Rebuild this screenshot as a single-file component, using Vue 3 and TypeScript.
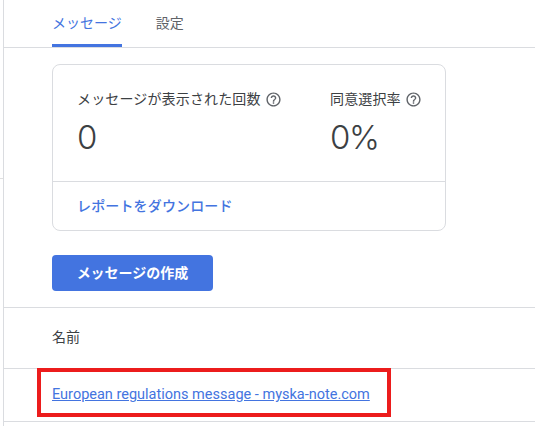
<script setup lang="ts">
const stats = [
  { label: 'メッセージが表示された回数', value: '0' },
  { label: '同意選択率', value: '0%' },
]
</script>

<template>
  <div class="page">
    <aside class="rail"><div class="rail-line"></div></aside>
    <main class="main">
      <nav class="tabs">
        <a class="tab active">メッセージ</a>
        <a class="tab">設定</a>
      </nav>
      <section class="card">
        <div class="stats">
          <div v-for="s in stats" :key="s.label" class="stat">
            <div class="label">
              <span>{{ s.label }}</span>
              <svg class="help" viewBox="0 0 24 24" width="17" height="17" fill="#5f6368">
                <path d="M11 18h2v-2h-2v2zm1-16C6.48 2 2 6.48 2 12s4.48 10 10 10 10-4.48 10-10S17.52 2 12 2zm0 18c-4.41 0-8-3.59-8-8s3.59-8 8-8 8 3.59 8 8-3.59 8-8 8zm0-14c-2.21 0-4 1.79-4 4h2c0-1.1.9-2 2-2s2 .9 2 2c0 2-3 1.75-3 5h2c0-2.25 3-2.5 3-5 0-2.21-1.79-4-4-4z" />
              </svg>
            </div>
            <div class="value">{{ s.value }}</div>
          </div>
        </div>
        <div class="card-foot"><a class="download">レポートをダウンロード</a></div>
      </section>
      <div class="action"><button class="create">メッセージの作成</button></div>
      <div class="table-head">名前</div>
      <div class="table-row">
        <a class="row-link">European regulations message - myska-note.com</a>
        <div class="highlight"></div>
      </div>
    </main>
  </div>
</template>

<style>
html, body { margin: 0; background: #fff; overflow: hidden; }
</style>

<style scoped>
.page {
  display: flex;
  width: 535px;
  height: 426px;
  overflow: hidden;
  background: #fff;
  font-family: Roboto, "Noto Sans CJK JP", sans-serif;
  color: #3c4043;
}
.rail {
  width: 3px;
  flex: none;
  padding-top: 178px;
  box-sizing: border-box;
}
.rail-line { height: 1px; background: #e0e0e0; }
.main {
  flex: 1;
  min-width: 0;
  border-left: 1px solid #dadce0;
}
.tabs {
  display: flex;
  gap: 34px;
  height: 47px;
  padding-left: 48px;
  border-bottom: 1px solid #dadce0;
}
.tab {
  height: 47px;
  box-sizing: border-box;
  padding-top: 13px;
  font-size: 14px;
  line-height: 20px;
  color: #5f6368;
}
.tab.active {
  color: #4374e0;
  border-bottom: 3px solid #4374e0;
}
.card {
  box-sizing: border-box;
  width: 394px;
  height: 167px;
  margin: 16px 0 0 48px;
  border: 1px solid #dadce0;
  border-radius: 8px;
}
.stats {
  display: flex;
  height: 116px;
  box-sizing: border-box;
  padding: 24px 0 0 24px;
}
.stat:first-child { width: 253px; }
.label {
  display: flex;
  align-items: center;
  gap: 4px;
  height: 20px;
  font-size: 14px;
  line-height: 20px;
  letter-spacing: 0.15px;
  color: #3c4043;
}
.help { flex: none; }
.value {
  margin-top: 8px;
  font-family: Inter, Roboto, sans-serif;
  font-size: 33px;
  line-height: 40px;
  font-weight: 300;
  letter-spacing: -1.5px;
}
.card-foot {
  height: 49px;
  box-sizing: border-box;
  border-top: 1px solid #dadce0;
  padding: 14px 0 0 25px;
}
.download {
  display: block;
  margin-left: -1px;
  font-size: 14px;
  line-height: 20px;
  letter-spacing: 0.15px;
  font-weight: 500;
  color: #4374e0;
}
.action {
  height: 77px;
  box-sizing: border-box;
  padding: 24px 0 0 48px;
  border-bottom: 1px solid #dadce0;
}
.create {
  display: block;
  width: 161px;
  height: 36px;
  padding: 0;
  border: 0;
  border-radius: 4px;
  background: #4374e0;
  color: #fff;
  font: 700 14px/36px Roboto, "Noto Sans CJK JP", sans-serif;
}
.table-head {
  height: 61px;
  box-sizing: border-box;
  padding: 19px 0 0 48px;
  font-size: 14px;
  line-height: 20px;
  color: #3c4043;
  border-bottom: 1px solid #dadce0;
}
.table-row {
  position: relative;
  height: 53px;
  box-sizing: border-box;
  padding: 15px 0 0 48px;
  border-bottom: 1px solid #dadce0;
}
.row-link {
  display: inline-block;
  font-size: 14.5px;
  line-height: 20px;
  color: #4374e0;
  text-decoration: underline;
}
.highlight {
  position: absolute;
  left: 33px;
  top: -1px;
  width: 354px;
  height: 49px;
  box-sizing: border-box;
  border: 4px solid #ec1c1c;
}
</style>
